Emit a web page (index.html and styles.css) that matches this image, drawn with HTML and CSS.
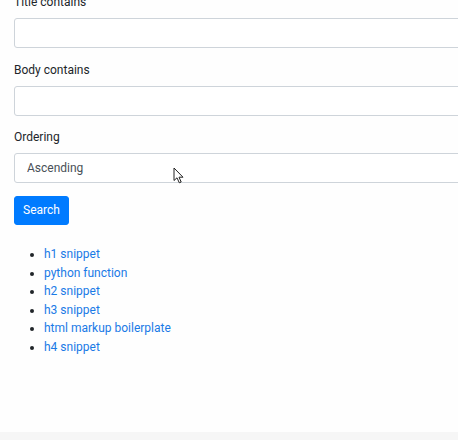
FILE: index.html
```html
<!DOCTYPE html>
<html>
<head>
<meta charset="utf-8">
<link rel="stylesheet" href="styles.css">
</head>
<body>
<div class="page">
  <form class="form">
    <div class="group">
      <label class="label">Title contains</label>
      <input class="control" type="text">
    </div>
    <div class="group">
      <label class="label">Body contains</label>
      <input class="control" type="text">
    </div>
    <div class="group">
      <label class="label">Ordering</label>
      <select class="control select"><option>Ascending</option></select>
    </div>
    <button class="btn" type="button">Search</button>
  </form>
  <ul class="results">
    <li><a href="#">h1 snippet</a></li>
    <li><a href="#">python function</a></li>
    <li><a href="#">h2 snippet</a></li>
    <li><a href="#">h3 snippet</a></li>
    <li><a href="#">html markup boilerplate</a></li>
    <li><a href="#">h4 snippet</a></li>
  </ul>
  <svg class="cursor" width="12" height="17" viewBox="0 0 12 17"><path d="M1 1 L1 13.5 L4 10.8 L6.3 15.8 L8.2 15 L6 10.2 L10 10.2 Z" fill="#fff" stroke="#222" stroke-width="1" stroke-linejoin="round"/></svg>
</div>
<div class="footer"></div>
</body>
</html>
```
FILE: styles.css
```css
html, body {
  margin: 0;
  padding: 0;
  background: #fff;
  overflow: hidden;
}
body {
  width: 458px;
  height: 440px;
  position: relative;
  font-family: "Roboto", "Noto Sans", sans-serif;
  font-size: 12px;
  color: #212529;
}
.page {
  display: flow-root;
  position: relative;
  padding-left: 14px;
  height: 432px;
  background: #fefefe;
}
.form {
  margin-top: -7px;
}
.group {
  margin-bottom: 12.5px;
}
.label {
  display: block;
  line-height: 19px;
  margin-bottom: 6px;
}
.control {
  display: block;
  box-sizing: border-box;
  width: 470px;
  height: 30px;
  border: 1px solid #ced4da;
  border-radius: 3px;
  background: #fff;
  font-family: inherit;
  font-size: 12px;
  color: #495057;
  padding: 0 12px;
  margin: 0;
  outline: none;
}
.select {
  appearance: none;
  -webkit-appearance: none;
}
.btn {
  display: block;
  height: 29.5px;
  padding: 0 8px;
  border: 1px solid #007bff;
  background: #007bff;
  color: #fff;
  border-radius: 3px;
  font-family: inherit;
  font-size: 12px;
  margin: 0;
}
.results {
  margin: 20px 0 0 0;
  padding-left: 30px;
  line-height: 18.6px;
}
.results a {
  color: #1a7ae6;
  text-decoration: none;
}
.cursor {
  position: absolute;
  left: 173px;
  top: 167px;
}
.footer {
  height: 8px;
  background: #f6f6f6;
}
```
